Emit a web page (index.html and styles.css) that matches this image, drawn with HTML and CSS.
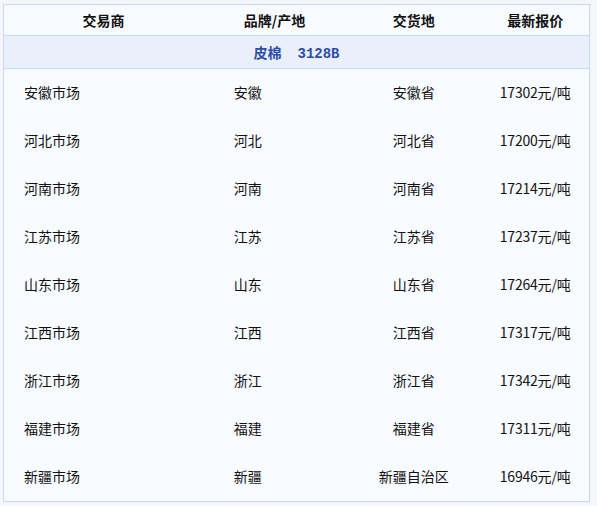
FILE: index.html
```html
<!DOCTYPE html>
<html lang="zh-CN">
<head>
<meta charset="utf-8">
<title>皮棉报价</title>
<link rel="stylesheet" href="styles.css">
</head>
<body>
<table class="quote">
  <colgroup>
    <col class="c1"><col class="c2"><col class="c3"><col class="c4">
  </colgroup>
  <thead>
    <tr class="head">
      <th>交易商</th><th>品牌/产地</th><th>交货地</th><th>最新报价</th>
    </tr>
    <tr class="sub">
      <th colspan="4"><span class="cn">皮棉</span><span class="code">3128B</span></th>
    </tr>
  </thead>
  <tbody>
    <tr><td class="mk">安徽市场</td><td class="br">安徽</td><td class="dl">安徽省</td><td class="pr">17302元/吨</td></tr>
    <tr><td class="mk">河北市场</td><td class="br">河北</td><td class="dl">河北省</td><td class="pr">17200元/吨</td></tr>
    <tr><td class="mk">河南市场</td><td class="br">河南</td><td class="dl">河南省</td><td class="pr">17214元/吨</td></tr>
    <tr><td class="mk">江苏市场</td><td class="br">江苏</td><td class="dl">江苏省</td><td class="pr">17237元/吨</td></tr>
    <tr><td class="mk">山东市场</td><td class="br">山东</td><td class="dl">山东省</td><td class="pr">17264元/吨</td></tr>
    <tr><td class="mk">江西市场</td><td class="br">江西</td><td class="dl">江西省</td><td class="pr">17317元/吨</td></tr>
    <tr><td class="mk">浙江市场</td><td class="br">浙江</td><td class="dl">浙江省</td><td class="pr">17342元/吨</td></tr>
    <tr><td class="mk">福建市场</td><td class="br">福建</td><td class="dl">福建省</td><td class="pr">17311元/吨</td></tr>
    <tr><td class="mk">新疆市场</td><td class="br">新疆</td><td class="dl">新疆自治区</td><td class="pr">16946元/吨</td></tr>
  </tbody>
</table>
</body>
</html>
```
FILE: styles.css
```css
html, body {
  margin: 0;
  padding: 0;
  background: #f4f6f9;
}
body {
  padding: 4px 0 0 3px;
  font-family: "Noto Sans CJK SC", "Liberation Sans", sans-serif;
  font-size: 14px;
  color: #111;
}
.quote {
  width: 587px;
  border-collapse: collapse;
  table-layout: fixed;
  background: #f8fbff;
  border: 1px solid #c6daf6;
}
.c1 { width: 199px; }
.c2 { width: 143px; }
.c3 { width: 135px; }
.c4 { width: 108px; }
.head th {
  height: 30px;
  padding: 0;
  font-weight: bold;
  text-align: center;
  border-bottom: 1px solid #c6daf6;
  line-height: 30px;
}
.sub th {
  height: 32px;
  padding: 0;
  background: #e9f0fa;
  color: #2f4ea8;
  font-weight: bold;
  text-align: center;
  border-bottom: 1px solid #c6daf6;
}
.sub .code {
  font-family: "Liberation Mono", monospace;
  margin-left: 16px;
}
tbody td {
  height: 46px;
  padding: 0 0 2px 0;
  line-height: 46px;
  white-space: nowrap;
}
td.mk { padding-left: 20px; }
td.br { padding-left: 31px; }
td.dl { text-align: center; }
td.pr { text-align: center; letter-spacing: -0.2px; }
```
